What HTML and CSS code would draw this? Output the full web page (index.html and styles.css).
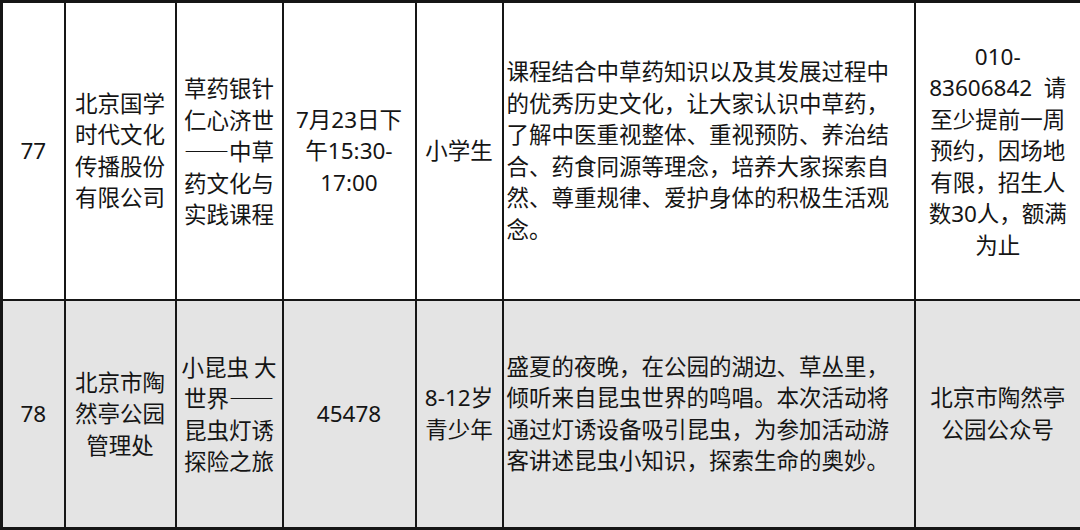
FILE: index.html
```html
<!DOCTYPE html>
<html lang="zh-CN">
<head>
<meta charset="utf-8">
<title>活动表</title>
<link rel="stylesheet" href="styles.css">
</head>
<body>
<table class="events">
  <colgroup>
    <col class="c-no">
    <col class="c-org">
    <col class="c-name">
    <col class="c-time">
    <col class="c-aud">
    <col class="c-desc">
    <col class="c-contact">
  </colgroup>
  <tbody>
    <tr class="row row-a">
      <td class="no">77</td>
      <td class="org">北京国学时代文化传播股份有限公司</td>
      <td class="name">草药银针仁心济世——中草药文化与实践课程</td>
      <td class="time">7月23日下午15:30-17:00</td>
      <td class="aud">小学生</td>
      <td class="desc">课程结合中草药知识以及其发展过程中的优秀历史文化，让大家认识中草药，了解中医重视整体、重视预防、养治结合、药食同源等理念，培养大家探索自然、尊重规律、爱护身体的积极生活观念。</td>
      <td class="contact">010-83606842&nbsp; 请至少提前一周预约，因场地有限，招生人数30人，额满为止</td>
    </tr>
    <tr class="row row-b">
      <td class="no">78</td>
      <td class="org">北京市陶然亭公园管理处</td>
      <td class="name">小昆虫 大世界——昆虫灯诱探险之旅</td>
      <td class="time">45478</td>
      <td class="aud">8-12岁青少年</td>
      <td class="desc">盛夏的夜晚，在公园的湖边、草丛里，倾听来自昆虫世界的鸣唱。本次活动将通过灯诱设备吸引昆虫，为参加活动游客讲述昆虫小知识，探索生命的奥妙。</td>
      <td class="contact">北京市陶然亭公园公众号</td>
    </tr>
  </tbody>
</table>
</body>
</html>
```
FILE: styles.css
```css
html, body {
  margin: 0;
  padding: 0;
  background: #ffffff;
}

.events {
  border-collapse: collapse;
  table-layout: fixed;
  width: 1080px;
  border: 3px solid #161616;
  font-family: "Noto Sans", "Noto Sans CJK SC", sans-serif;
  font-size: 22.5px;
  line-height: 31.5px;
  color: #151515;
}

.c-no { width: 63px; }
.c-org { width: 111px; }
.c-name { width: 107px; }
.c-time { width: 133px; }
.c-aud { width: 87px; }
.c-desc { width: 412px; }
.c-contact { width: 167px; }

.events td {
  border: 2px solid #161616;
  vertical-align: middle;
  text-align: center;
  padding: 0 8px;
  overflow-wrap: normal;
}

.row-a { height: 298px; }
.row-b { height: 229px; background: #e4e4e4; }

.events td.no { padding: 0 2px; }
.events td.org { padding: 0 8px; }
.events td.name {
  padding: 0 3px;
  font-family: "Noto Sans CJK SC", sans-serif;
}
.events td.aud { padding: 0 3px; }
.events td.desc {
  text-align: left;
  padding: 0 10px 0 3px;
}
.events td.contact { padding: 0 10px; }
```
